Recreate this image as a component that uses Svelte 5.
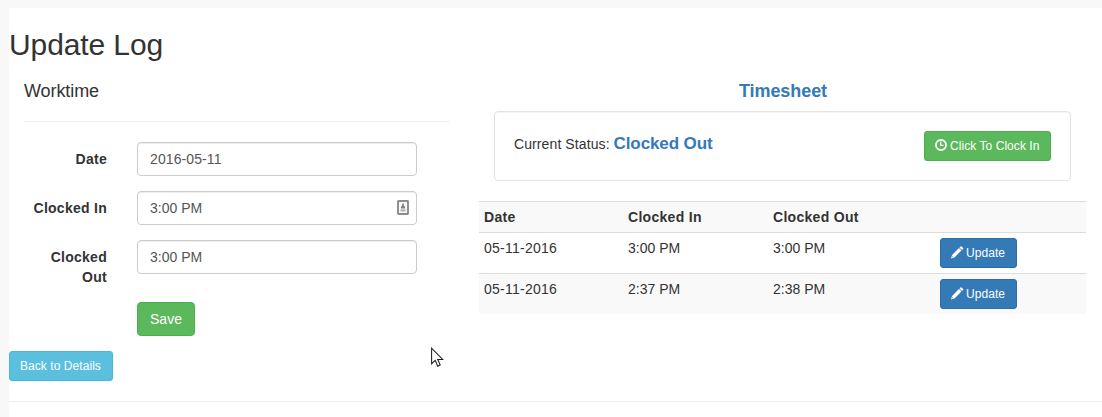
<script>
  const fields = [
    { id: 'date', label: 'Date', value: '2016-05-11', card: false },
    { id: 'in', label: 'Clocked In', value: '3:00 PM', card: true },
    { id: 'out', label: 'Clocked Out', value: '3:00 PM', card: false },
  ];
  const rows = [
    { date: '05-11-2016', start: '3:00 PM', end: '3:00 PM' },
    { date: '05-11-2016', start: '2:37 PM', end: '2:38 PM' },
  ];
</script>

<div class="page">
  <h2>Update Log</h2>
  <div class="columns">
    <section class="worktime">
      <h4>Worktime</h4>
      <hr />
      <form>
        {#each fields as f}
          <div class="group">
            <label for={f.id}>{f.label}</label>
            <div class="control">
              <input id={f.id} class:date={f.id === 'date'} type="text" value={f.value} />
              {#if f.card}
                <svg class="card" width="12" height="16" viewBox="0 0 12 16">
                  <rect x="1" y="1" width="10" height="13" rx=".5" fill="#f7f7f7" stroke="#8c8c8c" stroke-width="1.900" />
                  <path d="M5.200 3.500h1.600v2l1.200 1.200v1.800H4V6.700l1.200-1.200z" fill="#808080" />
                  <path d="M3.500 9.300h5v2.200h-5z" fill="#b5b5b5" />
                </svg>
              {/if}
            </div>
          </div>
        {/each}
        <div class="group actions">
          <button type="button" class="btn green save">Save</button>
        </div>
      </form>
    </section>

    <section class="timesheet">
      <h4 class="title">Timesheet</h4>
      <div class="well">
        <div class="status"><span class="caption">Current Status:</span> <strong>Clocked Out</strong></div>
        <button type="button" class="btn small green clock">
          <svg width="12" height="12" viewBox="0 0 12 12">
            <circle cx="6" cy="6" r="5" fill="none" stroke="#fff" stroke-width="1.900" />
            <path d="M5.700 2.800v3.600h2.800" fill="none" stroke="#fff" stroke-width="1.200" />
          </svg>
          <span>Click To Clock In</span>
        </button>
      </div>
      <table>
        <colgroup><col class="c1" /><col class="c2" /><col class="c3" /><col /></colgroup>
        <tbody>
          <tr><th>Date</th><th>Clocked In</th><th>Clocked Out</th><th></th></tr>
          {#each rows as r}
            <tr>
              <td class="date">{r.date}</td>
              <td>{r.start}</td>
              <td>{r.end}</td>
              <td>
                <button type="button" class="btn small blue">
                  <svg width="13" height="13" viewBox="0 0 13 13">
                    <path d="M0 12.500l1.100-3.500L8 2.100l2.400 2.400-6.900 6.900z" fill="#fff" />
                    <path d="M8.500 1.600L9.600.5q.5-.5 1 0l1.500 1.500q.5.5 0 1L11 4.100z" fill="#fff" />
                    <path d="M1.100 10.200l1.300 1.300" stroke="#337ab7" stroke-width=".6" />
                  </svg>
                  <span>Update</span>
                </button>
              </td>
            </tr>
          {/each}
        </tbody>
      </table>
    </section>
  </div>
  <button type="button" class="btn small cyan back">Back to Details</button>
  <hr />
  <svg class="pointer" width="13" height="21" viewBox="0 0 13 21">
    <path d="M.6 1.200v15.500l3.600-3.400 2.500 5.900 2.500-1.100-2.500-5.600h5z" fill="#fff" stroke="#1d1d2b" stroke-width="1.050" />
  </svg>
</div>

<style>
  :global(body) {
    background: #f8f8f8;
  }
  .page,
  .page * {
    box-sizing: border-box;
  }
  .page {
    margin: 8px 0 0 9px;
    min-height: 409px;
    padding-top: 20px;
    background: #fff;
    color: #333;
    font: 14px/20px "Liberation Sans", Arial, sans-serif;
  }
  h2 {
    margin: 0 0 10px;
    font-size: 30px;
    font-weight: 400;
    line-height: 33px;
    letter-spacing: -0.1px;
  }
  h4 {
    margin: 10px 0;
    font-size: 18px;
    font-weight: 400;
    line-height: 20px;
    letter-spacing: -0.08px;
  }
  hr {
    height: 1px;
    margin: 20px 0;
    border: 0;
    background: #eee;
  }
  .columns {
    display: flex;
  }
  .worktime {
    width: 455px;
    padding: 0 15px;
  }
  .group {
    display: flex;
    margin-bottom: 15px;
  }
  label {
    width: 83px;
    padding: 7px 0 0 4px;
    margin-right: 30px;
    text-align: right;
    font-weight: 700;
    letter-spacing: 0.27px;
  }
  .control {
    position: relative;
    width: 280px;
    height: 34px;
  }
  input {
    display: block;
    width: 100%;
    height: 34px;
    padding: 6px 12px;
    border: 1px solid #ccc;
    border-radius: 4px;
    background: #fff;
    box-shadow: inset 0 1px 1px rgba(0, 0, 0, 0.075);
    color: #555;
    font: inherit;
  }
  .date {
    letter-spacing: 0.25px;
  }
  input.date {
    letter-spacing: 0.1px;
  }
  .card {
    position: absolute;
    right: 8px;
    top: 9px;
  }
  .actions {
    padding-left: 113px;
  }
  .btn {
    display: inline-flex;
    align-items: center;
    justify-content: center;
    height: 34px;
    padding: 0;
    border: 1px solid;
    border-radius: 4px;
    color: #fff;
    font: inherit;
    white-space: nowrap;
  }
  .small {
    height: 30px;
    gap: 3px;
    justify-content: flex-start;
    padding-left: 10px;
    border-radius: 3px;
    font-size: 12px;
    line-height: 18px;
    letter-spacing: 0.06px;
  }
  .save {
    width: 58px;
  }
  .green {
    background: #5cb85c;
    border-color: #4cae4c;
  }
  .blue {
    display: flex;
    gap: 2px;
    width: 77px;
    background: #337ab7;
    border-color: #2e6da4;
  }
  .blue svg {
    margin-top: -1px;
  }
  .cyan {
    background: #5bc0de;
    border-color: #46b8da;
  }
  .clock {
    width: 127px;
  }
  .clock svg {
    margin-top: -2px;
  }
  .back {
    display: flex;
    width: 104px;
  }
  .timesheet {
    flex: 1;
    padding: 0 16px 0 15px;
  }
  .title {
    padding-left: 1px;
    text-align: center;
    color: #337ab7;
    font-weight: 700;
  }
  .well {
    display: flex;
    justify-content: space-between;
    height: 70px;
    margin: 0 15px 20px;
    padding: 19px;
    border: 1px solid #e3e3e3;
    border-radius: 4px;
    box-shadow: inset 0 1px 1px rgba(0, 0, 0, 0.05);
  }
  .status {
    padding-top: 3px;
  }
  .caption {
    letter-spacing: 0.1px;
  }
  strong {
    color: #337ab7;
    font-size: 17px;
    letter-spacing: -0.1px;
  }
  table {
    width: 100%;
    border-collapse: separate;
    border-spacing: 0;
    table-layout: fixed;
  }
  .c1 {
    width: 144px;
  }
  .c2 {
    width: 145px;
  }
  .c3 {
    width: 167px;
  }
  th,
  td {
    padding: 5px;
    border-top: 1px solid #ddd;
    text-align: left;
    vertical-align: top;
  }
  th {
    height: 31px;
    letter-spacing: 0.3px;
  }
  tr:nth-child(odd) {
    background: #f9f9f9;
  }
  .pointer {
    position: absolute;
    left: 431px;
    top: 347px;
  }
</style>
